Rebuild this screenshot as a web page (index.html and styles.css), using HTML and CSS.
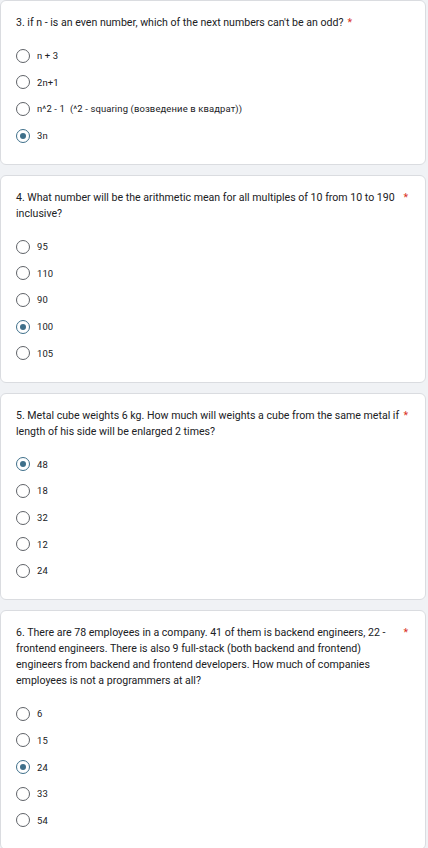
FILE: index.html
```html
<!DOCTYPE html>
<html lang="en">
<head>
<meta charset="utf-8">
<title>Quiz</title>
<link rel="stylesheet" href="styles.css">
</head>
<body>
<main class="form">
  <section class="card">
    <div class="title"><span class="title-text">3. if n - is an even number, which of the next numbers can't be an odd?</span><span class="req">*</span></div>
    <div class="options">
      <label class="opt"><span class="radio"></span><span class="label">n + 3</span></label>
      <label class="opt"><span class="radio"></span><span class="label">2n+1</span></label>
      <label class="opt"><span class="radio"></span><span class="label">n^2 - 1&nbsp; (^2 - squaring (возведение в квадрат))</span></label>
      <label class="opt"><span class="radio checked"></span><span class="label">3n</span></label>
    </div>
  </section>

  <section class="card">
    <div class="title"><span class="title-text">4. What number will be the arithmetic mean for all multiples of 10 from 10 to 190 inclusive?</span><span class="req">*</span></div>
    <div class="options">
      <label class="opt"><span class="radio"></span><span class="label">95</span></label>
      <label class="opt"><span class="radio"></span><span class="label">110</span></label>
      <label class="opt"><span class="radio"></span><span class="label">90</span></label>
      <label class="opt"><span class="radio checked"></span><span class="label">100</span></label>
      <label class="opt"><span class="radio"></span><span class="label">105</span></label>
    </div>
  </section>

  <section class="card">
    <div class="title"><span class="title-text">5. Metal cube weights 6 kg. How much will weights a cube from the same metal if length of his side will be enlarged 2 times?</span><span class="req">*</span></div>
    <div class="options">
      <label class="opt"><span class="radio checked"></span><span class="label">48</span></label>
      <label class="opt"><span class="radio"></span><span class="label">18</span></label>
      <label class="opt"><span class="radio"></span><span class="label">32</span></label>
      <label class="opt"><span class="radio"></span><span class="label">12</span></label>
      <label class="opt"><span class="radio"></span><span class="label">24</span></label>
    </div>
  </section>

  <section class="card">
    <div class="title"><span class="title-text">6. There are 78 employees in a company. 41 of them is backend engineers, 22 - frontend engineers. There is also 9 full-stack (both backend and frontend) engineers from backend and frontend developers. How much of companies employees is not a programmers at all?</span><span class="req">*</span></div>
    <div class="options">
      <label class="opt"><span class="radio"></span><span class="label">6</span></label>
      <label class="opt"><span class="radio"></span><span class="label">15</span></label>
      <label class="opt"><span class="radio checked"></span><span class="label">24</span></label>
      <label class="opt"><span class="radio"></span><span class="label">33</span></label>
      <label class="opt"><span class="radio"></span><span class="label">54</span></label>
    </div>
  </section>
</main>
</body>
</html>
```

FILE: styles.css
```css
* { box-sizing: border-box; }

html, body {
  margin: 0;
  padding: 0;
  background: #f0f2f5;
}

body {
  font-family: Roboto, "Noto Sans", Arial, sans-serif;
  color: #202124;
}

.form {
  display: flex;
  flex-direction: column;
  gap: 10px;
  width: 426px;
  padding-bottom: 20px;
}

.card {
  background: #fff;
  border: 1px solid #dadce0;
  border-radius: 6px;
  padding: 14px 15px 15px 15px;
}

.title {
  display: flex;
  align-items: flex-start;
  font-size: 10.6px;
  line-height: 16px;
  letter-spacing: 0;
  color: #202124;
}

.title-text {
  flex: 0 1 auto;
}

.req {
  flex: none;
  color: #d93025;
  padding-left: 4px;
  padding-right: 2px;
}

.options {
  margin-top: 11.33px;
  display: flex;
  flex-direction: column;
}

.opt {
  height: 26.67px;
  display: flex;
  align-items: center;
  gap: 7px;
}

.radio {
  width: 14px;
  height: 14px;
  border-radius: 50%;
  border: 1.4px solid #5f6368;
  display: flex;
  align-items: center;
  justify-content: center;
  flex: none;
}

.radio.checked {
  border-color: #3e6f8a;
}

.radio.checked::after {
  content: "";
  width: 6px;
  height: 6px;
  border-radius: 50%;
  background: #3e6f8a;
}

.label {
  font-size: 9.45px;
  letter-spacing: 0.13px;
  color: #202124;
}
```
